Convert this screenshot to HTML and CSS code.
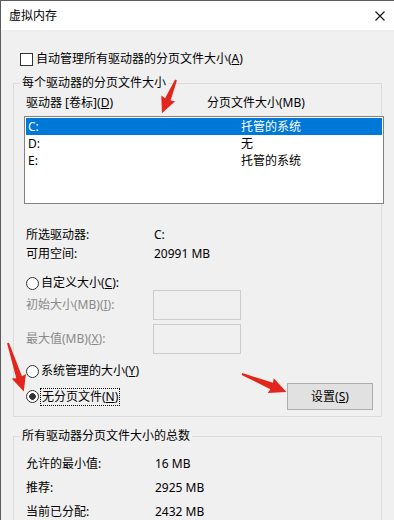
FILE: index.html
```html
<!DOCTYPE html>
<html lang="zh-CN">
<head>
    <meta charset="UTF-8">
    <meta name="viewport" content="width=device-width, initial-scale=1.0">
    <title>虚拟内存</title>
    <link rel="stylesheet" href="styles.css">
</head>
<body>
    <div class="window">
        <div class="titlebar">
            <span class="title">虚拟内存</span>
            <svg class="close" width="10" height="10" viewBox="0 0 10 10">
                <path d="M0.5 0.5 L9.5 9.5 M9.5 0.5 L0.5 9.5" stroke="#111" stroke-width="1.1" fill="none"/>
            </svg>
        </div>

        <div class="content">
            <div class="check-row">
                <span class="checkbox"></span>
                <span>自动管理所有驱动器的分页文件大小(<u>A</u>)</span>
            </div>

            <fieldset class="group group-drives">
                <legend>每个驱动器的分页文件大小</legend>
                <div class="list-head">
                    <span>驱动器 [卷标](<u>D</u>)</span>
                    <span>分页文件大小(MB)</span>
                </div>
                <ul class="drive-list">
                    <li class="selected"><span>C:</span><span>托管的系统</span></li>
                    <li><span>D:</span><span>无</span></li>
                    <li><span>E:</span><span>托管的系统</span></li>
                </ul>

                <div class="info">
                    <span>所选驱动器:</span><span>C:</span>
                    <span>可用空间:</span><span>20991 MB</span>
                </div>

                <div class="radio-row">
                    <span class="radio"></span>
                    <span>自定义大小(<u>C</u>):</span>
                </div>
                <div class="size-row">
                    <span>初始大小(MB)(<u>I</u>):</span>
                    <span class="textbox"></span>
                </div>
                <div class="size-row">
                    <span>最大值(MB)(<u>X</u>):</span>
                    <span class="textbox"></span>
                </div>

                <div class="radio-row system">
                    <span class="radio"></span>
                    <span>系统管理的大小(<u>Y</u>)</span>
                </div>
                <div class="last-row">
                    <div class="radio-row">
                        <span class="radio checked"></span>
                        <span class="focus">无分页文件(<u>N</u>)</span>
                    </div>
                    <button class="btn">设置(<u>S</u>)</button>
                </div>
            </fieldset>

            <fieldset class="group group-total">
                <legend>所有驱动器分页文件大小的总数</legend>
                <div class="totals">
                    <span>允许的最小值:</span><span>16 MB</span>
                    <span>推荐:</span><span>2925 MB</span>
                    <span>当前已分配:</span><span>2432 MB</span>
                </div>
            </fieldset>
        </div>
    </div>

    <!-- red annotation arrows drawn over the dialog -->
    <svg class="arrows" width="394" height="520" viewBox="0 0 394 520">
        <g fill="#e3261d">
            <polygon transform="translate(176 80) rotate(113)" points="0,-1 21,-3 20,-7.5 36,0 20,7.5 21,3 0,1"/>
            <polygon transform="translate(8 343) rotate(72)" points="0,-1 36,-3 35,-7.5 51,0 35,7.5 36,3 0,1"/>
            <polygon transform="translate(242 374) rotate(22)" points="0,-1 32,-3.5 31,-8 48,0 31,8 32,3.5 0,1"/>
        </g>
    </svg>
</body>
</html>
```

FILE: styles.css
```css
body{
    margin: 0;
    width: 394px;
    height: 520px;
    overflow: hidden;
    position: relative;
    background: #f0f0f0;
    color: #000;
    font-family: "Noto Sans", "Noto Sans CJK SC", sans-serif;
    font-size: 12px;
    line-height: 18px;
}

u{
    text-decoration-thickness: 1px;
    text-underline-offset: 1px;
}

.window{
    height: 520px;
    box-sizing: border-box;
    border-top: 1px solid #5c5c5c;
    border-left: 1px solid #5c5c5c;
}

.titlebar{
    height: 29px;
    background: #ffffff;
    display: flex;
    align-items: center;
    justify-content: space-between;
    padding-left: 8px;
}

.close{
    margin-right: 9px;
}

.content{
    padding-top: 22px;
}

.check-row{
    display: flex;
    align-items: center;
    gap: 3px;
    height: 14px;
    line-height: 14px;
    margin-left: 19px;
}

.checkbox{
    width: 13px;
    height: 13px;
    box-sizing: border-box;
    border: 1px solid #333333;
    background: #ffffff;
}

.group{
    margin: 9px 0 0 12px;
    width: 369px;
    box-sizing: border-box;
    border: 1px solid #dcdcdc;
    padding: 4px 8px 6px 12px;
    min-width: 0;
}

.group legend{
    padding: 0 2px;
    margin-left: -6px;
    line-height: 16px;
}

.list-head{
    display: grid;
    grid-template-columns: 181px 1fr;
    line-height: 16px;
}

.drive-list{
    list-style: none;
    margin: 5px 0 0 -2px;
    width: 360px;
    height: 88px;
    box-sizing: border-box;
    padding: 1px;
    border: 1px solid #828282;
    background: #ffffff;
}

.drive-list li{
    display: grid;
    grid-template-columns: 213px 1fr;
    height: 17px;
    line-height: 17px;
    padding-left: 2px;
}

.drive-list li.selected{
    background: #0078d7;
    color: #ffffff;
}

.info{
    display: grid;
    grid-template-columns: 128px 1fr;
    row-gap: 1px;
    margin-top: 22px;
}

.radio-row{
    display: flex;
    align-items: center;
    gap: 2px;
    height: 14px;
    line-height: 14px;
    margin-top: 13px;
}

.radio{
    width: 13px;
    height: 13px;
    box-sizing: border-box;
    border: 1px solid #333333;
    border-radius: 50%;
    background: #ffffff;
    flex-shrink: 0;
}

.radio.checked{
    background: radial-gradient(circle, #333333 0 3px, #ffffff 3.6px);
}

.size-row{
    display: grid;
    grid-template-columns: 127px 88px;
    align-items: center;
    height: 30px;
    color: #8a8a8a;
}

.size-row + .size-row{
    margin-top: 4px;
}

.textbox{
    height: 30px;
    box-sizing: border-box;
    border: 1px solid #cccccc;
    background: #f0f0f0;
}

.radio-row.system{
    margin-top: 10px;
}

.last-row{
    display: flex;
    align-items: center;
    justify-content: space-between;
    height: 27px;
    margin-top: 5px;
}

.last-row .radio-row{
    margin-top: 0;
    height: 18px;
    gap: 1px;
}

.focus{
    border: 1px dotted #000000;
    padding: 0 1px;
    line-height: 16px;
}

.btn{
    width: 86px;
    height: 27px;
    padding: 0;
    background: #e1e1e1;
    border: 1px solid #adadad;
    border-radius: 0;
    font: inherit;
    color: #000;
}

.group-total{
    margin-top: 11px;
    padding-top: 11px;
    padding-bottom: 20px;
}

.totals{
    display: grid;
    grid-template-columns: 129px 1fr;
    row-gap: 6px;
}

.arrows{
    position: absolute;
    left: 0;
    top: 0;
    pointer-events: none;
}
```
